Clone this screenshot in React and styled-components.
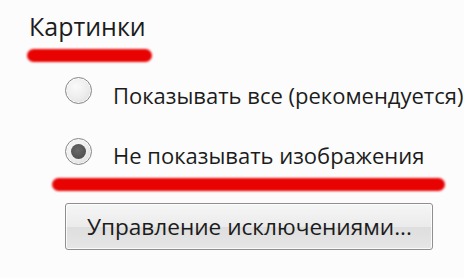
import React from 'react'
import styled, { createGlobalStyle } from 'styled-components'

const GlobalStyle = createGlobalStyle`
    html, body {
        margin: 0;
        padding: 0;
        background: #fcfcfc;
        overflow: hidden;
    }
    body {
        font-family: "Open Sans", "Noto Sans", "DejaVu Sans", sans-serif;
        color: #1c1c1c;
    }
`

const Panel = styled.section`
    display: flex;
    flex-direction: column;
    align-items: flex-start;
    width: 464px;
    height: 278px;
    padding-top: 11px;
    box-sizing: border-box;
    overflow: hidden;
`

const Title = styled.h2`
    margin: 0 0 0 29px;
    font-size: 25px;
    font-weight: 400;
    line-height: 30px;
    white-space: nowrap;
`

const Marker = styled.div`
    height: 13px;
    width: ${p => p.$width}px;
    margin-left: ${p => p.$left}px;
    margin-top: ${p => p.$top}px;
    border-radius: 7px;
    background: #e80202;
    filter: blur(1.3px);
`

const Options = styled.div`
    display: flex;
    flex-direction: column;
    gap: 29px;
    margin: 15px 0 0 65px;
`

const Row = styled.label`
    display: flex;
    align-items: flex-start;
    gap: 21px;
    white-space: nowrap;
`

const Radio = styled.span`
    flex: none;
    display: flex;
    align-items: center;
    justify-content: center;
    width: 27px;
    height: 27px;
    box-sizing: border-box;
    border-radius: 50%;
    border: 1.5px solid #878787;
    background: radial-gradient(circle at 40% 35%, #fafafa 0%, #ececec 55%, #d6d6d6 100%);
    box-shadow: inset 0 0 0 1px rgba(255, 255, 255, 0.7);

    &::after {
        content: '';
        display: ${p => (p.$checked ? 'block' : 'none')};
        width: 15px;
        height: 15px;
        border-radius: 50%;
        background: radial-gradient(circle at 45% 40%, #6a6a6a 0%, #555 60%, #444 100%);
    }
`

const Label = styled.span`
    font-size: 22px;
    line-height: 28px;
    margin-top: 3.5px;
`

const Button = styled.button`
    margin: 12px 0 0 65px;
    width: 368px;
    height: 47px;
    padding: 0 0 0 21px;
    text-align: left;
    font-family: inherit;
    font-size: 22.6px;
    color: #1c1c1c;
    border: 1px solid #8f8f8f;
    border-radius: 3px;
    background: linear-gradient(#f6f6f6, #ebebeb 50%, #dedede 51%, #e6e6e6);
    box-shadow: inset 0 0 0 1px rgba(255, 255, 255, 0.8);
    white-space: nowrap;
`

const App = () => {
    return (
        <>
            <GlobalStyle />
            <Panel>
                <Title>Картинки</Title>
                <Marker $width={125} $left={27} $top={8} />
                <Options>
                    <Row>
                        <Radio />
                        <Label>Показывать все (рекомендуется)</Label>
                    </Row>
                    <Row>
                        <Radio $checked />
                        <Label>Не показывать изображения</Label>
                    </Row>
                </Options>
                <Marker $width={393} $left={52} $top={8.5} />
                <Button>Управление исключениями...</Button>
            </Panel>
        </>
    )
}

export default App
